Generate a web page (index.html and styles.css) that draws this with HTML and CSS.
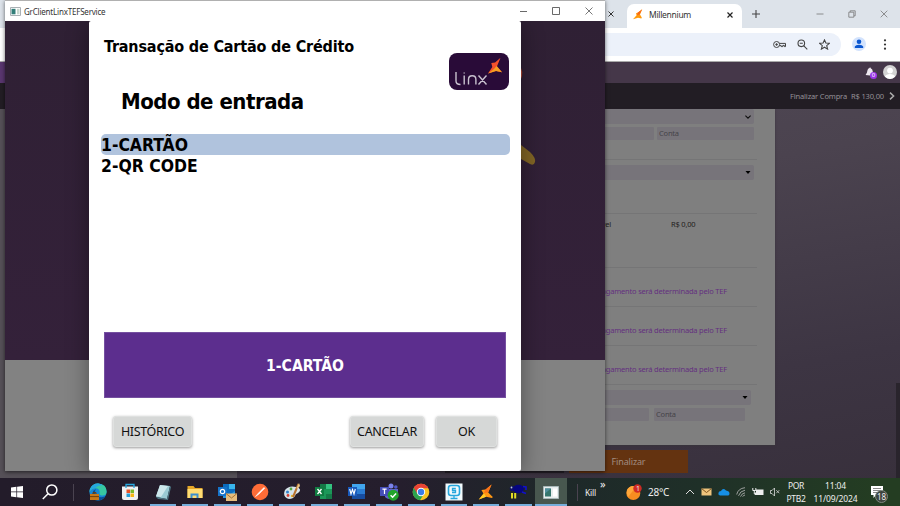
FILE: index.html
```html
<!DOCTYPE html>
<html lang="pt-BR">
<head>
  <meta charset="UTF-8" />
  <meta name="viewport" content="width=device-width, initial-scale=1" />
  <title>GrClientLinxTEFService</title>
  <link rel="stylesheet" href="styles.css">
</head>
<body>
  <!-- navegador -->
  <div class="browser">
    <div class="tabs">
      <span class="old-tab"><svg width="6" height="6" viewBox="0 0 6 6"><path d="M.5.5l5 5M5.5.5l-5 5" stroke="#333"/></svg></span>
      <div class="tab">
        <svg width="10" height="11" viewBox="0 0 10 11"><path d="M9.2.2L7 5.6 8.8 8.4 8.4 9.6 5 8.8 0 10.2 3.6 6.2 3 4.2 5 3.6z" fill="#ff9a0a"/><path d="M9.2.2L6.6 5.5 4 6.2 5 3.6z" fill="#f7661c"/></svg>
        <span class="tab-title">Millennium</span>
        <svg width="6" height="6" viewBox="0 0 6 6"><path d="M.5.5l5 5M5.5.5l-5 5" stroke="#222" stroke-width="1.2"/></svg>
      </div>
      <svg class="new-tab" width="8" height="8" viewBox="0 0 8 8"><path d="M4 0v8M0 4h8" stroke="#444" stroke-width="1.1"/></svg>
      <div class="win-buttons">
        <svg width="8" height="8" viewBox="0 0 8 8"><path d="M.5 4h7" stroke="#777" stroke-width=".8"/></svg>
        <svg width="8" height="8" viewBox="0 0 8 8"><path d="M.8 2.2h5v5h-5zM2.2 2V.8h5v5H6" fill="none" stroke="#777" stroke-width=".8"/></svg>
        <svg width="8" height="8" viewBox="0 0 8 8"><path d="M.7.7l6.6 6.6M7.3.7L.7 7.3" stroke="#777" stroke-width=".8"/></svg>
      </div>
    </div>
    <div class="toolbar">
      <div class="address">
        <svg width="13" height="9" viewBox="0 0 13 9" fill="none" stroke="#444" stroke-width="1"><circle cx="3.6" cy="4.5" r="3"/><circle cx="3.6" cy="4.5" r=".8" fill="#444"/><path d="M6.5 3.4h6v3.2h-1.2V5.4H9.8v1.2H8.2V5.6H6.5"/></svg>
        <svg width="11" height="11" viewBox="0 0 11 11" fill="none" stroke="#444" stroke-width="1.1"><circle cx="4.3" cy="4.3" r="3.3"/><path d="M6.8 6.8l3.5 3.5M2.8 4.3h3"/></svg>
        <svg width="11" height="11" viewBox="0 0 11 11" fill="none" stroke="#444" stroke-width="1.1"><path d="M5.5.9l1.4 3.1 3.5.3-2.7 2.3.9 3.5-3.1-1.9-3.1 1.9.9-3.5L.6 4.3 4.1 4z"/></svg>
      </div>
      <div class="profile"><svg width="10" height="10" viewBox="0 0 10 10" fill="#0b57d0"><circle cx="5" cy="2.8" r="2.3"/><path d="M.8 9V7.6Q1.6 5.8 5 5.8t4.2 1.8V9z"/></svg></div>
      <svg width="4" height="11" viewBox="0 0 4 11" fill="#333"><circle cx="2" cy="1.3" r="1.1"/><circle cx="2" cy="5.5" r="1.1"/><circle cx="2" cy="9.7" r="1.1"/></svg>
    </div>
    <div class="site-header">
      <div class="bell">
        <svg width="11" height="11" viewBox="0 0 11 11" fill="#eee8f0"><path d="M5 .2q.8.3.7 1.1 2 .8 2.1 3.4L9.4 9 .6 8 2 5.6Q2.3 1.9 4.5 1z"/></svg>
        <span class="bell-count">0</span>
      </div>
      <svg width="14" height="14" viewBox="0 0 14 14"><circle cx="7" cy="7" r="7" fill="#d3d3d3"/><circle cx="7" cy="5.6" r="2.9" fill="#fff"/><path d="M1.8 11.6Q3 9 7 9t5.2 2.6Q10 14 7 14t-5.2-2.4z" fill="#fff"/></svg>
    </div>
    <div class="checkout-bar">
      <span>Finalizar Compra</span><span class="total">R$ 130,00</span>
      <svg width="6" height="8" viewBox="0 0 6 8"><path d="M1 .6L4.6 4 1 7.4" fill="none" stroke="#aaa" stroke-width="1.5"/></svg>
    </div>
    <div class="page">
      <div class="panel">
        <div class="block first">
          <div class="select"><svg width="6" height="4" viewBox="0 0 6 4"><path d="M.4.6L3 3.2 5.6.6" fill="none" stroke="#111" stroke-width="1.1"/></svg></div>
          <div class="fields"><div class="field"></div><div class="field account">Conta</div></div>
        </div>
        <div class="block second"><div class="select"><svg width="6" height="3" viewBox="0 0 6 3"><path d="M.5 0h5L3 3z"/></svg></div></div>
        <div class="block values"><span>Valor disponível</span><span class="money">R$ 0,00</span></div>
        <div class="block tef">A forma de pagamento será determinada pelo TEF</div>
        <div class="block tef">A forma de pagamento será determinada pelo TEF</div>
        <div class="block tef">A forma de pagamento será determinada pelo TEF</div>
        <div class="block last">
          <div class="select"><svg width="6" height="3" viewBox="0 0 6 3"><path d="M.5 0h5L3 3z"/></svg></div>
          <div class="fields"><div class="field"></div><div class="field account">Conta</div></div>
        </div>
      </div>
      <div class="page-actions"><div class="back"></div><div class="finish">Finalizar</div></div>
      <div class="scroll"></div>
    </div>
  </div>

  <!-- janela do TEF -->
  <div class="window">
    <div class="titlebar">
      <svg width="11" height="9" viewBox="0 0 11 9"><path d="M.5.5h10v8H.5z" fill="#fff" stroke="#aab0b4"/><path d="M1.5 1.8h4v5.5h-4z" fill="#337e79"/><path d="M7 1.8h2.5v5.5H7z" fill="#c9d8cf"/></svg>
      <span class="name">GrClientLinxTEFService</span>
      <svg width="7" height="9" viewBox="0 0 7 9"><path d="M0 4.5h7" stroke="#444" stroke-width=".8"/></svg>
      <svg width="8" height="8" viewBox="0 0 8 8"><path d="M.5.5h7v7h-7z" fill="none" stroke="#444" stroke-width=".8"/></svg>
      <svg width="8" height="8" viewBox="0 0 8 8"><path d="M.5.5l7 7M7.5.5l-7 7" stroke="#555" stroke-width=".8"/></svg>
    </div>
    <div class="window-body">
      <svg class="backdrop" width="84" height="339" viewBox="0 0 84 339"><path d="M0 47q2 4 1 8l-1 3z" fill="#ad4430"/><path d="M0 124l9 7q6 6 5 10t-5 2L0 138z" fill="#806425"/></svg>
      <div class="dialog">
        <div class="dialog-head">
          <h1>Transação de Cartão de Crédito</h1>
          <div class="logo">
            <svg width="60" height="37" viewBox="0 0 60 37">
              <path d="M7 19v9q0 3.5 4.5 3.5M15.2 22.5v9M15.2 19.5v1M19.5 31.5v-5q0-3.7 3.7-3.7t3.7 3.7v5M29.5 22.5l8 9M37.5 22.5l-8 9" fill="none" stroke="#c9c2cf" stroke-width="1.4"/>
              <path d="M51.5 4.7l-3.5 8.5 5 6-6-1.2-8 2.5 4.3-6.5-1-4 3.8-.6z" fill="#f4512b"/>
              <path d="M47.5 13l5.5 6.2-6-1.2-8 2.5 6-4.6z" fill="#f6a021"/>
            </svg>
          </div>
        </div>
        <h2>Modo de entrada</h2>
        <ul class="options">
          <li class="selected">1-CARTÃO</li>
          <li>2-QR CODE</li>
        </ul>
        <div class="choice">1-CARTÃO</div>
        <div class="buttons">
          <button class="history"><span>HISTÓRICO</span></button>
          <button class="cancel"><span>CANCELAR</span></button>
          <button class="ok"><span>OK</span></button>
        </div>
      </div>
    </div>
  </div>

  <!-- barra de tarefas -->
  <div class="taskbar">
    <div class="start"><svg width="12" height="12" viewBox="0 0 12 12" fill="#fff"><path d="M0 1.6l5.4-.8v4.8H0zM6.1.7L12 0v5.6H6.1zM0 6.3h5.4v4.9L0 10.4zM6.1 6.3H12V12l-5.9-.8z"/></svg></div>
    <div class="search"><svg width="16" height="16" viewBox="0 0 16 16" fill="none" stroke="#fff" stroke-width="1.5"><circle cx="9.8" cy="6" r="5.1"/><path d="M6 9.7L.8 15"/></svg></div>
    <div class="split"></div>
    <div class="apps">
      <div class="app"><svg width="18" height="18" viewBox="0 0 18 18"><circle cx="9" cy="9" r="8.6" fill="#1687d4"/><path d="M1 6Q3 .4 9 .4q8.6.6 8.6 8 0 3.8-4 4.2-3.2 0-3-2Q11.5 6 7 5.3 2.6 5 .5 9z" fill="#37c7a0"/><path d="M1 6Q3 .4 9 .4q3 0 5 2Q9 2 6 5.3 3 5 .5 9z" fill="#25a8df"/><path d="M7 6Q5 9 7 12q3 3.5 9 1.5Q13 18 8 17.4 2.7 14 4 8z" fill="#0b4e94"/><path d="M1 11h9v6H1z" fill="#c77818"/><path d="M4 11V9.6h3V11M1 13.6h9" fill="none" stroke="#6f3e0a"/></svg></div>
      <div class="app"><svg width="18" height="18" viewBox="0 0 18 18"><path d="M1 3.5h16V15q0 2-2 2H3q-2 0-2-2z" fill="#f1f1f1"/><path d="M5 5V1.5h8V5" fill="none" stroke="#28a9e0" stroke-width="1.3"/><path d="M5.5 6.5H9V10H5.5z" fill="#e95225"/><path d="M9.5 6.5H13V10H9.5z" fill="#7cb928"/><path d="M5.5 10.5H9V14H5.5z" fill="#269fd8"/><path d="M9.5 10.5H13V14H9.5z" fill="#f7b614"/></svg></div>
      <div class="app open"><svg width="18" height="18" viewBox="0 0 18 18"><path d="M6 2l10 1-3 13-11-2z" fill="#9acbd4"/><path d="M6 2l8 1-7 11-5-1z" fill="#cde8ec"/><path d="M2 14l11 2 3-13 1 1-3 13-10-1z" fill="#4c7684"/></svg></div>
      <div class="app open"><svg width="18" height="18" viewBox="0 0 18 18"><path d="M1.5 3h6L9 5h7.5v10h-15z" fill="#e5a728"/><path d="M1.5 6h15v9h-15z" fill="#ffdc72"/><path d="M4.5 15v-4.5h8V15h-2v-2.5h-4V15z" fill="#3c8fcd"/></svg></div>
      <div class="app open"><svg width="19" height="18" viewBox="0 0 19 18"><path d="M5 1h12v12H5z" fill="#0a6bbd"/><path d="M11 1h6v5h-6z" fill="#39b5ed"/><path d="M5 8l6 4 6-4v7H5z" fill="#2795db"/><path d="M0 4h9v9H0z" fill="#1573ca"/><circle cx="4.5" cy="8.5" r="2.2" fill="none" stroke="#fff" stroke-width="1.2"/><path d="M8 10.5h11V18H8z" fill="#e7bd7d"/><path d="M8 10.5l5.5 4.5 5.5-4.5" fill="none" stroke="#a67432"/></svg></div>
      <div class="app open"><svg width="18" height="18" viewBox="0 0 18 18"><circle cx="9" cy="9" r="8.3" fill="#ff6c37"/><path d="M4.5 13.5l3-3.5 5.5-5.5.8.8-5.8 5.7z" fill="#fff" stroke="#fff" stroke-width=".6"/></svg></div>
      <div class="app open"><svg width="18" height="18" viewBox="0 0 18 18"><path d="M2 7Q6 2 13 4t2 6q-3 1-3 3-2 3-6 3Q-1 14 2 7z" fill="#d7e4ec"/><circle cx="4.5" cy="9" r="1.5" fill="#3485cd"/><circle cx="8" cy="6" r="1.4" fill="#58a840"/><circle cx="5" cy="12.5" r="1.4" fill="#d64135"/><circle cx="9" cy="13" r="1.2" fill="#e2b531"/><path d="M15.5 1L10 14" stroke="#b87330" stroke-width="2"/><path d="M16 0l1 3-2.5 3-1-1z" fill="#e8c485"/></svg></div>
      <div class="app open"><svg width="18" height="18" viewBox="0 0 18 18"><path d="M5 1h12v15H5z" fill="#1b9758"/><path d="M11 1h6v5h-6z" fill="#34c481"/><path d="M5 1h6v5H5zM11 11h6v5h-6z" fill="#157947"/><path d="M0 4h9v9H0z" fill="#107c41"/><path d="M2.5 6l4 5M6.5 6l-4 5" stroke="#fff" stroke-width="1.3"/></svg></div>
      <div class="app open"><svg width="18" height="18" viewBox="0 0 18 18"><path d="M4 1h13v15H4z" fill="#2b7cd3"/><path d="M4 1h13v5H4z" fill="#41a5ee"/><path d="M4 11h13v5H4z" fill="#174da0"/><path d="M0 4h9v9H0z" fill="#185abd"/><path d="M1.7 6l1.3 5 1.5-4.5L6 11l1.3-5" fill="none" stroke="#fff" stroke-width="1.1"/></svg></div>
      <div class="app open"><svg width="19" height="18" viewBox="0 0 19 18"><circle cx="11" cy="3" r="2.5" fill="#7b83eb"/><circle cx="15.8" cy="4" r="1.8" fill="#5059c9"/><path d="M5 6h9v8q-5 4-9 0zM14 6h4v6h-4z" fill="#5d63c9"/><path d="M0 4h9v9H0z" fill="#464eb8"/><path d="M2.4 6.2h4.2M4.5 6v5" stroke="#fff" stroke-width="1.2"/><circle cx="13.2" cy="12.2" r="5.5" fill="#22a42a"/><path d="M10.6 12.2l2 2 3.5-3.6" fill="none" stroke="#fff" stroke-width="1.5"/></svg></div>
      <div class="app open"><svg width="18" height="18" viewBox="0 0 18 18"><circle cx="9" cy="9" r="8.3" fill="#f9c322"/><path d="M9 9L1.8 4.8A8.3 8.3 0 0 0 8 17.2l4-6.5z" fill="#2ca34e"/><path d="M1.8 4.8A8.3 8.3 0 0 1 16.4 5.2H9L5.5 11z" fill="#e94335"/><circle cx="9" cy="9" r="4.2" fill="#fff"/><circle cx="9" cy="9" r="3.2" fill="#3a7de8"/></svg></div>
      <div class="app open"><svg width="18" height="18" viewBox="0 0 18 18"><path d="M.5.5h17v17H.5z" fill="#f2fafd"/><rect x="3.5" y="2.5" width="11" height="10" rx="2.5" fill="none" stroke="#26a7dd" stroke-width="1.6"/><path d="M10.8 5.5H7.5v2h3v2H7M9 13v2.5M5.5 15.5h7" fill="none" stroke="#26a7dd" stroke-width="1.3"/></svg></div>
      <div class="app open"><svg width="16" height="16" viewBox="0 0 16 16"><path d="M13.6.5L10.2 8.4l4.6 4.6-.8 1-6-1.2L.8 15.4 5.4 9.6 3.4 6l4.2-.4z" fill="#ff9714"/><path d="M13.6.5L10 8.4 6 9l1.6-3.4z" fill="#f9711a"/><path d="M6 9.6l2 3.2-7.2 2.6z" fill="#ffce28"/></svg></div>
      <div class="app open"><svg width="18" height="18" viewBox="0 0 18 18"><circle cx="3.4" cy="5.5" r="2.6" fill="#10106d"/><ellipse cx="9.5" cy="6" rx="5.5" ry="4.3" fill="#050580"/><path d="M14 3.5l3 .5v3M13 9l4 1.5" fill="none" stroke="#1111cc" stroke-width="1.6"/><path d="M3 10v5.5M6.2 10v5.5" stroke="#e2dc24" stroke-width="2"/><circle cx="2.5" cy="4.5" r=".9" fill="#bbcccc"/></svg></div>
      <div class="app open active"><svg width="16" height="13" viewBox="0 0 16 13"><path d="M.5.5h15v12H.5z" fill="#e8eeee" stroke="#a8b8b8"/><path d="M2 2.5h6v8H2z" fill="#35766d"/><path d="M2 2.5h6l-6 5z" fill="#4f8e9b"/><path d="M10 2.5h4v8h-4z" fill="#fff"/></svg></div>
    </div>
    <div class="split band"></div>
    <span class="kill">Kill</span>
    <span class="more">»</span>
    <div class="weather"><svg width="17" height="17" viewBox="0 0 17 17"><circle cx="7.3" cy="9" r="7" fill="#f68d20"/><path d="M1 6q4-6 9-3L2 13Q0 9 1 6z" fill="#ffa73a"/><circle cx="11.5" cy="4.5" r="4.2" fill="#cf2b24"/></svg><span class="alert">1</span></div>
    <span class="temp">28°C</span>
    <div class="tray">
      <svg width="10" height="12" viewBox="0 0 10 12"><path d="M1 8l4-4 4 4" fill="none" stroke="#ddd"/></svg>
      <svg width="11" height="12" viewBox="0 0 11 12"><path d="M.5 2.5h10v7H.5z" fill="#efc47d"/><path d="M.5 2.5l5 4 5-4" fill="none" stroke="#82551f"/></svg>
      <svg width="12" height="12" viewBox="0 0 12 12"><path d="M2 9.5Q0 9 .4 7T3 5Q5 1.5 8 4.5q3.5.5 3.5 3T9.5 9.5z" fill="#168fe5"/></svg>
      <svg width="10" height="12" viewBox="0 0 10 12" fill="none" stroke="#bbb" stroke-width=".8"><path d="M.7 8.5Q2 2.5 9 1.7M2.5 9.8Q4 5 9 4.2M4.5 10.6Q6 7 9 6.8M6.7 10.7q.8-1.8 2.3-1.6"/></svg>
      <svg width="12" height="12" viewBox="0 0 12 12"><path d="M4 3.5h7.5v5.5H3V6.5h1z" fill="#eee"/><path d="M.8 2v2.5h3V2M2.3 4.5V8H4" fill="none" stroke="#eee"/></svg>
      <svg width="10" height="12" viewBox="0 0 10 12" fill="none" stroke="#ddd" stroke-width=".8"><path d="M.5 4.5H2L4.5 2v8L2 7.5H.5zM6.3 4.2l3 3M9.3 4.2l-3 3"/></svg>
    </div>
    <div class="lines lang"><span>POR</span><span>PTB2</span></div>
    <div class="lines clock"><span>11:04</span><span>11/09/2024</span></div>
    <div class="notify"><svg width="12" height="13" viewBox="0 0 12 13"><path d="M0 0h12v9H5l-2.5 3V9H0z" fill="#fff"/><path d="M2 2.5h8M2 4.5h8M2 6.5h5" stroke="#555" stroke-width=".7"/></svg><span class="notify-count">18</span></div>
  </div>
</body>
</html>
```
FILE: styles.css
```css
* {
  box-sizing: border-box;
}
body {
  margin: 0;
  position: relative;
  width: 900px;
  height: 506px;
  overflow: hidden;
  display: flex;
  flex-direction: column;
  font-family: "Noto Sans", "Open Sans", sans-serif;
  background: #49434d;
}
svg {
  display: block;
  flex: none;
}

/* navegador */
.browser {
  height: 478px;
  display: flex;
  flex-direction: column;
}
.tabs {
  height: 28px;
  padding-left: 608px;
  display: flex;
  align-items: center;
  background: #dde3ea;
}
.old-tab {
  width: 19px;
}
.tab {
  align-self: flex-end;
  display: flex;
  align-items: center;
  width: 115px;
  height: 24px;
  padding: 0 9px 3px 6px;
  border-radius: 7px 7px 0 0;
  background: #fff;
}
.tab-title {
  flex: 1;
  padding-left: 6px;
  font-size: 8.5px;
  letter-spacing: -0.3px;
  color: #333;
}
.new-tab {
  margin-left: 10px;
}
.win-buttons {
  display: flex;
  gap: 24px;
  margin-left: 56px;
}
.toolbar {
  height: 33.5px;
  padding-left: 60px;
  display: flex;
  align-items: center;
  background: #fff;
  border-bottom: 1px solid #aaa;
}
.address {
  width: 781px;
  height: 23px;
  padding-right: 11px;
  display: flex;
  align-items: center;
  justify-content: flex-end;
  gap: 11px;
  border-radius: 0 12px 12px 0;
  background: #ecf1fa;
}
.profile {
  width: 14px;
  height: 14px;
  margin: 0 17px 0 11px;
  display: grid;
  place-items: center;
  border-radius: 50%;
  background: #d3e3fd;
}
.site-header {
  height: 21.5px;
  padding-right: 3px;
  display: flex;
  align-items: center;
  justify-content: flex-end;
  gap: 6px;
  background: linear-gradient(90deg, #59366f 0, #59366f 8px, #453749 580px);
}
.bell {
  position: relative;
  width: 12px;
}
.bell-count {
  position: absolute;
  left: 5px;
  top: 5px;
  width: 7px;
  height: 7px;
  border-radius: 50%;
  background: #9b36e8;
  color: #fff;
  font-size: 6px;
  line-height: 7px;
  text-align: center;
}
.checkout-bar {
  height: 26px;
  padding-right: 5px;
  display: flex;
  align-items: center;
  justify-content: flex-end;
  background: #221d24;
  color: #959097;
  font-size: 7.5px;
  letter-spacing: -0.15px;
}
.total {
  margin: 0 5px 0 4px;
}
.page {
  position: relative;
  flex: 1;
  padding-left: 237px;
  background: linear-gradient(170deg, #514956 0%, #4b434f 35%, #3d3543 75%, #38303c 100%);
}
.page::before {
  content: "";
  position: absolute;
  left: 0;
  top: 0;
  width: 237px;
  height: 100%;
  background: #555057;
}
.panel {
  width: 538px;
  height: 335.5px;
  padding-right: 18px;
  background: #7f7f7f;
  box-shadow: 0 1px 2px #39343b;
  color: #1f1d20;
  font-size: 7.5px;
  letter-spacing: -0.2px;
}
.block {
  border-bottom: 1px solid #757576;
}
.select {
  height: 15px;
  margin-right: 3px;
  padding-right: 3px;
  display: flex;
  align-items: center;
  justify-content: flex-end;
  border-radius: 2px;
  background: #77747a;
}
.fields {
  display: flex;
  gap: 3px;
  margin: 3px 3px 0 0;
}
.field {
  flex: 1;
  height: 12.5px;
  border-radius: 1px;
  background: #77747a;
  color: #454348;
  line-height: 13px;
}
.account {
  flex: none;
  width: 97px;
  padding-left: 2px;
}
.first {
  height: 51px;
}
.second {
  height: 54px;
  padding-top: 5px;
}
.values {
  height: 54px;
  padding-top: 5px;
  display: flex;
}
.values span:first-child {
  width: 374px;
  text-align: right;
}
.money {
  margin-left: 60px;
}
.tef {
  height: 39px;
  padding: 18px 30px 0 0;
  color: #643080;
  text-align: right;
}
.last {
  padding: 5px 3px 0 0;
  border: 0;
}
.last .fields {
  gap: 5.5px;
  margin-right: 9px;
}
.last .account {
  width: 91px;
}
.page-actions {
  display: flex;
  gap: 5px;
  margin: 5px 0 0 208px;
}
.back, .finish {
  width: 119px;
  height: 23.5px;
}
.back {
  background: #252028;
}
.finish {
  background: #643310;
  color: #a18c80;
  font-size: 9px;
  letter-spacing: -0.15px;
  line-height: 24px;
  text-align: center;
}
.scroll {
  position: absolute;
  right: 0;
  top: 274px;
  bottom: 0;
  width: 4px;
  background: #29242c;
}

/* janela do TEF */
.window {
  position: absolute;
  left: 5px;
  top: 0;
  width: 600px;
  height: 471px;
  display: flex;
  flex-direction: column;
  border-top: 1px solid #b0b0b0;
  background: #fff;
  box-shadow: 0 1px 4px rgba(0,0,0,0.6);
}
.titlebar {
  height: 20px;
  padding: 0 12px 0 5px;
  display: flex;
  align-items: center;
}
.name {
  flex: 1;
  padding-left: 3px;
  font-size: 8px;
  letter-spacing: -0.2px;
  color: #333;
}
.titlebar svg + svg {
  margin-left: 25px;
}
.window-body {
  position: relative;
  flex: 1;
  padding-left: 84px;
  background: linear-gradient(#2f2034 0, #34213a 339px, #828282 339px);
}
.backdrop {
  position: absolute;
  right: 0;
  top: 0;
}
.dialog {
  position: relative;
  width: 432px;
  height: 450px;
  padding: 0 11px 0 12px;
  display: flex;
  flex-direction: column;
  background: #fff;
  border-radius: 2px;
  box-shadow: 0 3px 22px rgba(0,0,0,0.4);
  clip-path: inset(0 -40px 0 -40px);
  color: #000;
  font-family: Tahoma, "DejaVu Sans Condensed", "DejaVu Sans", sans-serif;
  font-stretch: condensed;
}
.dialog-head {
  height: 69px;
  display: flex;
  justify-content: space-between;
}
h1 {
  margin: 15px 0 0 3px;
  font-size: 16px;
  line-height: 22px;
  letter-spacing: -0.17px;
  white-space: nowrap;
}
.logo {
  width: 60px;
  height: 37px;
  margin: 32px 1px 0 0;
  overflow: hidden;
  border-radius: 8px;
  background: #290b38;
}
h2 {
  margin: 0 0 0 20px;
  height: 44px;
  font-size: 22px;
  line-height: 24px;
  letter-spacing: -0.5px;
}
.options {
  height: 198px;
  margin: 0;
  padding: 0;
  list-style: none;
  font-size: 17.4px;
  font-weight: bold;
}
.options li {
  height: 21px;
  line-height: 23px;
  border-radius: 5px;
}
.options .selected {
  background: #b0c3dd;
}
.choice {
  height: 66px;
  margin: 0 4px 0 3px;
  border: 1px solid #7550a0;
  background: #5c2e8e;
  color: #fff;
  font-size: 15.6px;
  font-weight: bold;
  line-height: 66px;
  text-align: center;
}
.buttons {
  display: flex;
  gap: 12px;
  margin: 18px 13px 0 12px;
}
.buttons button {
  height: 31px;
  padding: 0;
  border: 1px solid #dfe1e0;
  border-radius: 3px;
  background: #d6d8d7;
  box-shadow: 0 1px 3px rgba(0,0,0,0.4);
  color: #111;
  font-family: "Noto Sans", sans-serif;
  font-size: 12.5px;
  letter-spacing: -0.35px;
}
.buttons .history {
  width: 79px;
  margin-right: auto;
}
.buttons .cancel {
  width: 74px;
}
.buttons .ok {
  width: 61px;
}

/* barra de tarefas */
.taskbar {
  height: 28px;
  display: flex;
  align-items: center;
  background: linear-gradient(90deg, #231c2a 0, #251e2d 400px, #1e2829 560px, #1f3028 700px, #243d22 880px);
  color: #eee;
  font-size: 8.5px;
}
.start, .search {
  display: grid;
  place-items: center;
  width: 34px;
}
.search {
  width: 32px;
}
.split {
  width: 1px;
  height: 17px;
  margin: 0 8px 0 7px;
  background: #4a4350;
}
.apps {
  display: flex;
  width: 485px;
  height: 28px;
}
.app {
  position: relative;
  flex: 1;
  display: grid;
  place-items: center;
}
.open::after {
  content: "";
  position: absolute;
  left: 3px;
  right: 3px;
  bottom: 0;
  height: 2px;
  background: #76aedb;
}
.active {
  background: #48574f;
}
.active::after {
  left: 0;
  right: 0;
}
.band {
  margin: 0 7px 0 10px;
}
.kill {
  width: 14px;
  letter-spacing: -0.2px;
}
.more {
  align-self: flex-start;
  width: 27px;
  padding-left: 1px;
  font-size: 11px;
  line-height: 12px;
}
.weather {
  position: relative;
  width: 22px;
}
.alert {
  position: absolute;
  left: 10px;
  top: 0;
  font-size: 7px;
  line-height: 9px;
}
.temp {
  width: 37px;
  font-size: 10px;
  letter-spacing: -0.25px;
}
.tray {
  display: flex;
  justify-content: space-between;
  width: 95px;
}
.lines {
  display: flex;
  flex-direction: column;
  align-items: center;
  line-height: 13px;
}
.lang {
  width: 32px;
  letter-spacing: -0.3px;
}
.clock {
  width: 47px;
  letter-spacing: -0.1px;
}
.notify {
  position: relative;
  margin-left: 12px;
}
.notify-count {
  position: absolute;
  left: 4px;
  top: 4px;
  width: 13px;
  height: 13px;
  border-radius: 50%;
  border: 1px solid #7d857d;
  background: #3d443d;
  font-size: 8px;
  line-height: 11px;
  text-align: center;
}
```
